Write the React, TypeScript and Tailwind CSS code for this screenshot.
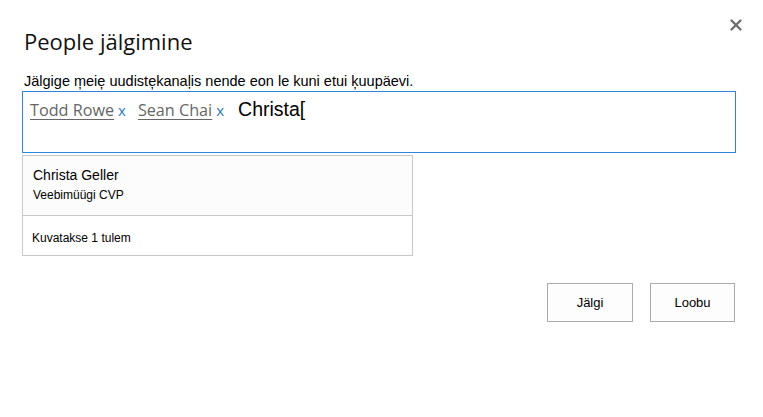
import { X } from "lucide-react";

const tokens = ["Todd Rowe", "Sean Chai"];

export default function App() {
  return (
    <div className="relative h-[417px] w-[763px] bg-white font-['Liberation_Sans',Arial,sans-serif] text-black">
      {/* sulgemisnupp */}
      <button className="absolute left-[727px] top-[16px] flex h-[18px] w-[18px] items-center justify-center text-[#6e6e6e]">
        <X size={18} strokeWidth={3.2} />
      </button>

      <div className="px-[22px] pt-[26px]">
        <h1 className="pl-[2px] font-['Open_Sans',sans-serif] text-[22px] leading-[30px] text-[#111]">
          People jälgimine
        </h1>

        <p className="mt-[17px] pl-[2px] text-[14.5px] leading-[17px]">
          Jälgige m̦eie̦ uudiste̦kanaļis nende eon le kuni etui k̦uupäevi.
        </p>

        {/* otsinguväli */}
        <div className="mt-[1px] flex h-[62px] w-[714px] items-start border border-[#2b88d8] px-[7px] pt-[5px]">
          <div className="flex items-baseline">
            {tokens.map((t) => (
              <span key={t} className="mr-[12px] flex items-baseline">
                <span className="font-['Open_Sans',sans-serif] text-[16.2px] leading-[24px] text-[#666] underline decoration-1 underline-offset-[3px]">
                  {t}
                </span>
                <span className="ml-[4px] font-['Open_Sans',sans-serif] text-[15px] text-[#2b7bc2]">
                  x
                </span>
              </span>
            ))}
            <span className="ml-[2px] text-[19.5px] leading-[24px]">Christa[</span>
          </div>
        </div>

        {/* soovitused */}
        <div className="mt-[2px] w-[391px] border border-[#c8c8c8]">
          <div className="bg-[#fcfcfc] px-[10px] pb-[10px] pt-[9px]">
            <div className="text-[14px] leading-[20px]">Christa Geller</div>
            <div className="text-[12px] leading-[20px]">Veebimüügi CVP</div>
          </div>
          <div className="border-t border-[#c8c8c8] px-[9px] pb-[8px] pt-[13px] text-[12px] leading-[18px]">
            Kuvatakse 1 tulem
          </div>
        </div>

        <div className="mt-[27px] flex justify-end gap-[17px] pr-[6px]">
          <button className="h-[39px] w-[86px] border border-[#ababab] bg-[#fdfdfd] text-[13px]">
            Jälgi
          </button>
          <button className="h-[39px] w-[85px] border border-[#ababab] bg-[#fdfdfd] text-[13px]">
            Loobu
          </button>
        </div>
      </div>
    </div>
  );
}
